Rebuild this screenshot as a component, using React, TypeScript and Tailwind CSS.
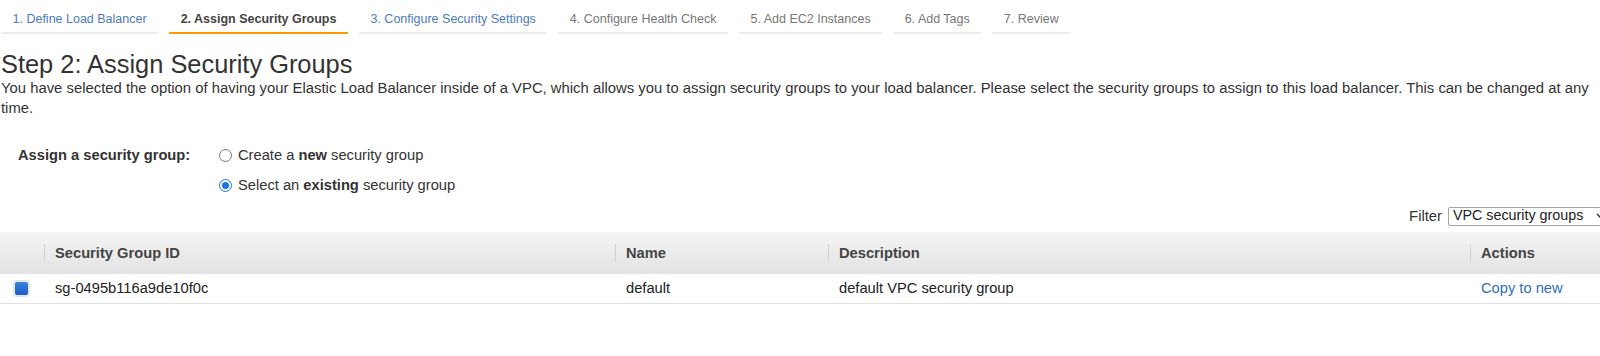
import React from "react";

const tabs = [
  { label: "1. Define Load Balancer", kind: "link" },
  { label: "2. Assign Security Groups", kind: "active" },
  { label: "3. Configure Security Settings", kind: "link" },
  { label: "4. Configure Health Check", kind: "muted" },
  { label: "5. Add EC2 Instances", kind: "muted" },
  { label: "6. Add Tags", kind: "muted" },
  { label: "7. Review", kind: "muted" },
];

function Radio({ checked }: { checked: boolean }) {
  return checked ? (
    <span className="flex h-[13px] w-[13px] items-center justify-center rounded-full border-[1.5px] border-[#1a73e8] bg-white">
      <span className="h-[7px] w-[7px] rounded-full bg-[#1a73e8]" />
    </span>
  ) : (
    <span className="h-[13px] w-[13px] rounded-full border border-[#767676] bg-white" />
  );
}

function HeaderCell({ label, sep = true }: { label: string; sep?: boolean }) {
  return (
    <div className="flex items-center">
      {sep && <span className="h-[18px] w-px bg-[#d0d0d0]" />}
      <span className="pl-[10px] font-bold text-[#444]">{label}</span>
    </div>
  );
}

export default function App() {
  return (
    <div className="h-[356px] w-[1600px] overflow-hidden bg-white font-['Liberation_Sans',Arial,sans-serif] text-[14.7px] text-[#333]">
      <div className="w-[1610px]">
        {/* Wizard tabs */}
        <div className="flex gap-[11px] pl-[1px]">
          {tabs.map((t) => (
            <div
              key={t.label}
              className={
                t.kind === "active"
                  ? "border-b-2 border-[#ff9900] px-[11.5px] pt-[11px] pb-[5px] text-[12.5px] leading-[16px] font-bold text-[#444]"
                  : t.kind === "link"
                  ? "border-b-2 border-[#eaeded] px-[11.5px] pt-[11px] pb-[5px] text-[12.5px] leading-[16px] text-[#4b7bbf]"
                  : "border-b-2 border-[#eaeded] px-[11.5px] pt-[11px] pb-[5px] text-[12.5px] leading-[16px] text-[#777]"
              }
            >
              {t.label}
            </div>
          ))}
        </div>

        <h1 className="mt-[16px] pl-[1px] text-[25.4px] leading-[28px] font-normal text-[#333]">
          Step 2: Assign Security Groups
        </h1>
        <p className="w-[1598px] pl-[1px] text-[14.85px] leading-[20px] text-[#333]">
          You have selected the option of having your Elastic Load Balancer inside of a VPC, which allows you to assign
          security groups to your load balancer. Please select the security groups to assign to this load balancer. This
          can be changed at any time.
        </p>

        {/* Assign options */}
        <div className="mt-[22px] flex flex-col">
          <div className="flex h-[30px] items-center">
            <div className="w-[219px] pl-[18px] font-bold text-[#333]">Assign a security group:</div>
            <Radio checked={false} />
            <span className="pl-[6px]">
              Create a <b>new</b> security group
            </span>
          </div>
          <div className="flex h-[30px] items-center">
            <div className="w-[219px]" />
            <Radio checked />
            <span className="pl-[6px]">
              Select an <b>existing</b> security group
            </span>
          </div>
        </div>

        {/* Filter */}
        <div className="flex h-[32px] items-center justify-end">
          <span className="mr-[6px] text-[14.8px] text-[#333]">Filter</span>
          <div className="flex h-[19px] w-[162px] items-center justify-between rounded-[2px] border border-[#a6a6a6] pl-[4px] pr-[4px] text-[14.3px] text-[#222]">
            <span>VPC security groups</span>
            <svg width="9" height="6" viewBox="0 0 9 6" fill="none">
              <path d="M1 1l3.5 3.5L8 1" stroke="#333" strokeWidth="1.4" />
            </svg>
          </div>
        </div>

        {/* Table */}
        <div className="grid h-[42px] grid-cols-[44px_571px_213px_642px_1fr] bg-linear-to-b from-[#f4f4f4] to-[#e3e3e3]">
          <div />
          <HeaderCell label="Security Group ID" />
          <HeaderCell label="Name" />
          <HeaderCell label="Description" />
          <HeaderCell label="Actions" />
        </div>
        <div className="grid h-[30px] grid-cols-[44px_571px_213px_642px_1fr] items-center border-b border-[#e1e1e1] text-[#222]">
          <div className="pl-[13px]">
            <span className="flex h-[17px] w-[17px] items-center justify-center rounded-[4px] bg-[#e4e6ea]">
              <span className="h-[13px] w-[13px] rounded-[2px] bg-linear-to-b from-[#3b82e0] to-[#1a5fc4]" />
            </span>
          </div>
          <div className="pl-[11px]">sg-0495b116a9de10f0c</div>
          <div className="pl-[11px]">default</div>
          <div className="pl-[11px]">default VPC security group</div>
          <div className="pl-[11px] text-[#2f6fbd]">Copy to new</div>
        </div>
      </div>
    </div>
  );
}
